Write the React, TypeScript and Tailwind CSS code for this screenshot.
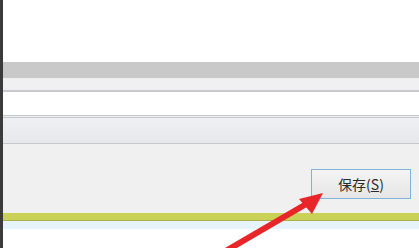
import React from "react";

const App = () => {
  return (
    <div className="relative w-[419px] h-[248px] overflow-hidden flex bg-white font-['Noto_Sans_CJK_SC',sans-serif]">
      {/* left dark edge */}
      <div className="w-[3px] h-full bg-[#3b3b3b]" />
      <div className="flex-1 flex flex-col">
        <div className="h-[62px] bg-white" />
        <div className="h-[16px] bg-[#c9c9c9]" />
        <div className="h-[14px] bg-[#f0f0f2] border-b-2 border-[#c9cbd0]" />
        <div className="h-[23px] bg-white" />
        {/* double line */}
        <div className="h-[1px] bg-[#c5c7cc]" />
        <div className="h-[1px] bg-[#eef0f3]" />
        <div className="h-[1px] bg-[#c5c7cc]" />
        <div className="h-[26px] bg-gradient-to-b from-[#eef0f3] to-[#e6e8ec] border-b border-[#c6c7ca]" />
        <div className="h-[69px] bg-[#f0f0f0] flex justify-end items-start pt-[25px] pr-[8px]">
          <button className="w-[100px] h-[30px] border border-[#7fb4d9] bg-gradient-to-b from-[#f4f4f4] to-[#e6e6e6] text-[14px] text-[#2a2a2a] leading-none flex items-center justify-center">
            保存(<span className="underline">S</span>)
          </button>
        </div>
        <div className="h-[8px] bg-[#c9d157] border-b border-[#aab04a]" />
        <div className="h-[8px] bg-[#e6f3f8]" />
        <div className="flex-1 bg-white" />
      </div>
      {/* red annotation arrow */}
      <svg className="absolute left-0 top-0" width="419" height="248" viewBox="0 0 419 248">
        <line x1="224" y1="252" x2="308" y2="203" stroke="#e8262a" strokeWidth="6" />
        <polygon points="323,193 299,199 312,214" fill="#e8262a" />
      </svg>
    </div>
  );
};

export default App;
